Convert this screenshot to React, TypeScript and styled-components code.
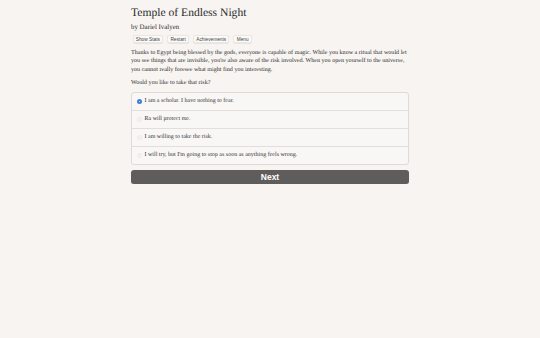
import React, { useState } from "react";
import styled, { createGlobalStyle } from "styled-components";

const Global = createGlobalStyle`
  html, body { margin: 0; padding: 0; background: #f7f4f1; }
  body {
    font-family: "Liberation Serif", "DejaVu Serif", serif;
    color: #2e2e2e;
    text-rendering: geometricPrecision;
  }
`;

const Page = styled.div`
  width: 278px;
  padding-top: 6px;
  margin-left: 131px;
`;

const Title = styled.h1`
  font-size: 11.6px;
  font-weight: normal;
  margin: 0;
  line-height: 14px;
  color: #2b2b2b;
`;

const Author = styled.div`
  font-size: 6.9px;
  margin-top: 3px;
  line-height: 10px;
`;

const Toolbar = styled.div`
  display: flex;
  gap: 4px;
  margin-top: 1.5px;
  padding-left: 1.5px;
`;

const ToolButton = styled.button`
  font-family: "Liberation Sans", Arial, sans-serif;
  font-size: 4.75px;
  color: #444;
  background: #fbfaf8;
  border: 0.5px solid #ebe7e3;
  border-radius: 2px;
  height: 8.5px;
  padding: 0 2.3px;
  line-height: 8px;
  box-shadow: 0 0.5px 1px rgba(0,0,0,0.07);
`;

const Para = styled.p`
  font-size: 6.1px;
  line-height: 8.6px;
  margin: 5.7px 0 0 0;
`;

const Question = styled.p`
  font-size: 6.1px;
  line-height: 8.6px;
  margin: 4.2px 0 0 0;
`;

const Choices = styled.div`
  margin-top: 4.7px;
  border: 1px solid #dedad6;
  border-radius: 3px;
  background: #f9f7f5;
`;

const Row = styled.label<{ $last?: boolean }>`
  display: flex;
  align-items: center;
  height: 17px;
  padding-left: 4.5px;
  gap: 2.5px;
  font-size: 6px;
  border-bottom: ${(p) => (p.$last ? "none" : "1px solid #e2deda")};
`;

const Radio = styled.span<{ $on?: boolean }>`
  width: 5.5px;
  height: 5.5px;
  border-radius: 50%;
  box-sizing: border-box;
  background: ${(p) => (p.$on ? "#fff" : "#f4f2f0")};
  border: ${(p) => (p.$on ? "2px solid #3b7ddd" : "0.5px solid #ebe8e5")};
  flex: none;
`;

const NextButton = styled.button`
  display: block;
  width: 100%;
  margin-top: 5px;
  height: 14.5px;
  border: none;
  border-radius: 3px;
  background: #5e5d5c;
  color: #fff;
  font-family: "Liberation Sans", Arial, sans-serif;
  font-weight: bold;
  font-size: 8.5px;
  box-shadow: 0 1px 1px rgba(0,0,0,0.15);
`;

const options = [
  "I am a scholar. I have nothing to fear.",
  "Ra will protect me.",
  "I am willing to take the risk.",
  "I will try, but I'm going to stop as soon as anything feels wrong.",
];

export default function App() {
  const [sel] = useState(0);
  return (
    <>
      <Global />
      <Page>
        <Title>Temple of Endless Night</Title>
        <Author>by Dariel Ivalyen</Author>
        <Toolbar>
          <ToolButton>Show Stats</ToolButton>
          <ToolButton>Restart</ToolButton>
          <ToolButton>Achievements</ToolButton>
          <ToolButton>Menu</ToolButton>
        </Toolbar>
        <Para>
          Thanks to Egypt being blessed by the gods, everyone is capable of magic. While you know a ritual that would let
          you see things that are invisible, you're also aware of the risk involved. When you open yourself to the universe,
          you cannot really foresee what might find you interesting.
        </Para>
        <Question>Would you like to take that risk?</Question>
        <Choices>
          {options.map((o, i) => (
            <Row key={i} $last={i === options.length - 1}>
              <Radio $on={i === sel} />
              {o}
            </Row>
          ))}
        </Choices>
        <NextButton>Next</NextButton>
      </Page>
    </>
  );
}
